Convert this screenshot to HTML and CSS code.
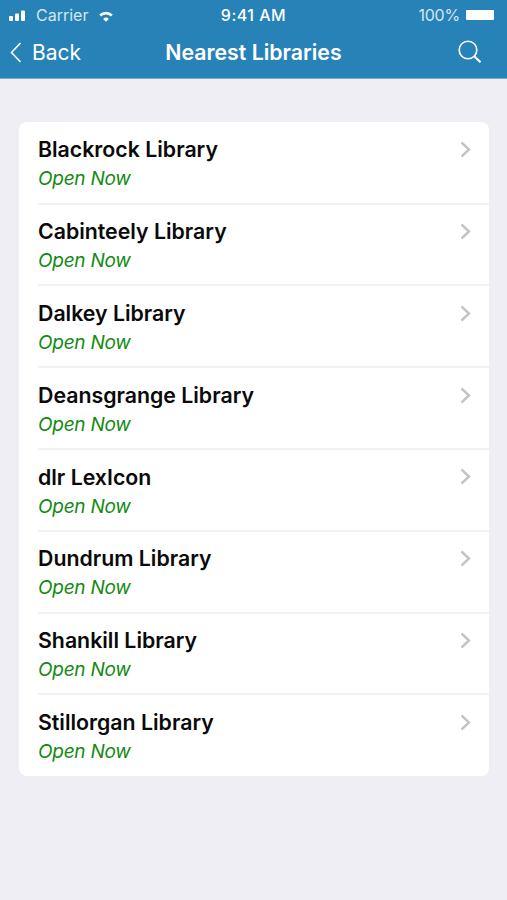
FILE: index.html
```html
<!DOCTYPE html>
<html lang="en">
<head>
  <meta charset="UTF-8">
  <title>Nearest Libraries</title>
  <meta name="viewport" content="width=device-width, initial-scale=1.0">
  <link rel="stylesheet" href="styles.css">
</head>
<body>

  <header class="header">
    <div class="status-bar">
      <div class="status-left">
        <svg class="signal" width="17" height="11" viewBox="0 0 17 11" fill="#fff">
          <rect x="0" y="6" width="4" height="5" rx="1"/>
          <rect x="6" y="3.5" width="4" height="7.5" rx="1"/>
          <rect x="12" y="0.5" width="4" height="10.5" rx="1"/>
        </svg>
        <span class="carrier">Carrier</span>
        <svg class="wifi" width="14" height="11" viewBox="0 0 14 11" fill="none" stroke="#fff">
          <path d="M1.2 4.6a8.2 8.2 0 0 1 11.6 0" stroke-width="2.8"/>
          <path d="M7 10.8L4.2 7.9a4 4 0 0 1 5.6 0z" fill="#fff" stroke="none"/>
        </svg>
      </div>
      <span class="time">9:41 AM</span>
      <div class="status-right">
        <span class="percent">100%</span>
        <span class="battery"></span>
      </div>
    </div>

    <nav class="nav-bar">
      <a class="back">
        <svg width="12" height="21" viewBox="0 0 12 21" fill="none" stroke="#fff" stroke-width="1.6">
          <path d="M10.5 1L1.5 10.5L10.5 20"/>
        </svg>
        <span class="back-label">Back</span>
      </a>
      <h1 class="title">Nearest Libraries</h1>
      <a class="search">
        <svg width="24" height="24" viewBox="0 0 24 24" fill="none" stroke="#fff" stroke-width="1.6">
          <circle cx="10" cy="10" r="8.8"/>
          <path d="M16.2 16.2L22.5 22.3" stroke-width="2"/>
        </svg>
      </a>
    </nav>
  </header>

  <ul class="library-list">
    <li class="library">
      <div class="library-info">
        <span class="library-name">Blackrock Library</span>
        <span class="library-status">Open Now</span>
      </div>
      <svg class="chevron" viewBox="0 0 11 17"><path d="M1.5 1.5L9 8.5L1.5 15.5"/></svg>
    </li>
    <li class="library">
      <div class="library-info">
        <span class="library-name">Cabinteely Library</span>
        <span class="library-status">Open Now</span>
      </div>
      <svg class="chevron" viewBox="0 0 11 17"><path d="M1.5 1.5L9 8.5L1.5 15.5"/></svg>
    </li>
    <li class="library">
      <div class="library-info">
        <span class="library-name">Dalkey Library</span>
        <span class="library-status">Open Now</span>
      </div>
      <svg class="chevron" viewBox="0 0 11 17"><path d="M1.5 1.5L9 8.5L1.5 15.5"/></svg>
    </li>
    <li class="library">
      <div class="library-info">
        <span class="library-name">Deansgrange Library</span>
        <span class="library-status">Open Now</span>
      </div>
      <svg class="chevron" viewBox="0 0 11 17"><path d="M1.5 1.5L9 8.5L1.5 15.5"/></svg>
    </li>
    <li class="library">
      <div class="library-info">
        <span class="library-name">dlr LexIcon</span>
        <span class="library-status">Open Now</span>
      </div>
      <svg class="chevron" viewBox="0 0 11 17"><path d="M1.5 1.5L9 8.5L1.5 15.5"/></svg>
    </li>
    <li class="library">
      <div class="library-info">
        <span class="library-name">Dundrum Library</span>
        <span class="library-status">Open Now</span>
      </div>
      <svg class="chevron" viewBox="0 0 11 17"><path d="M1.5 1.5L9 8.5L1.5 15.5"/></svg>
    </li>
    <li class="library">
      <div class="library-info">
        <span class="library-name">Shankill Library</span>
        <span class="library-status">Open Now</span>
      </div>
      <svg class="chevron" viewBox="0 0 11 17"><path d="M1.5 1.5L9 8.5L1.5 15.5"/></svg>
    </li>
    <li class="library">
      <div class="library-info">
        <span class="library-name">Stillorgan Library</span>
        <span class="library-status">Open Now</span>
      </div>
      <svg class="chevron" viewBox="0 0 11 17"><path d="M1.5 1.5L9 8.5L1.5 15.5"/></svg>
    </li>
  </ul>

</body>
</html>
```
FILE: styles.css
```css
* {
  box-sizing: border-box;
}

body {
  margin: 0;
  min-height: 100vh;
  font-family: Inter, "Liberation Sans", sans-serif;
  background-color: #efeef4;
}

/* Header */
.header {
  height: 79px;
  background-color: #2782b8;
  border-bottom: 1px solid #77afd0;
  color: #fff;
}

.status-bar {
  display: grid;
  grid-template-columns: 1fr auto 1fr;
  align-items: center;
  height: 30px;
  padding: 0 13px 0 13px;
  font-size: 16px;
}

.status-left,
.status-right {
  display: flex;
  align-items: center;
}

.status-left {
  margin-left: -4px;
}

.status-right {
  justify-content: flex-end;
}

.carrier {
  margin-left: 10px;
  color: #d3e6f1;
}

.wifi {
  margin: 2px 0 0 10.5px;
}

.time {
  font-size: 16px;
  font-weight: 500;
  letter-spacing: 0.5px;
}

.percent {
  color: #d3e6f1;
  letter-spacing: -0.2px;
}

.battery {
  width: 28px;
  height: 10px;
  margin-left: 6px;
  background-color: #fff;
  border-radius: 1px;
}

.nav-bar {
  display: grid;
  grid-template-columns: 1fr auto 1fr;
  align-items: center;
  height: 44px;
  padding: 0 10px;
}

.back {
  display: flex;
  align-items: center;
}

.back-label {
  margin-left: 10px;
  font-size: 21px;
}

.title {
  margin: 0;
  font-size: 21.3px;
  font-weight: 600;
}

.search {
  display: flex;
  justify-content: flex-end;
  padding-right: 15px;
}

/* List */
.library-list {
  margin: 43px 18px 0 19px;
  padding: 0 0 0 19px;
  list-style: none;
  background-color: #fff;
  border-radius: 8px;
}

.library {
  display: flex;
  justify-content: space-between;
  height: 81.8px;
  padding: 12.6px 18px 0 0;
  border-bottom: 2px solid #f2f2f4;
}

.library:first-child {
  height: 82.6px;
  padding-top: 13.4px;
}

.library:last-child {
  height: 80.6px;
  border-bottom: none;
}

.library-info {
  display: flex;
  flex-direction: column;
}

.library-name {
  font-size: 21.3px;
  font-weight: 600;
  line-height: 28px;
  color: #0a0a0a;
}

.library-status {
  font-size: 19px;
  font-style: italic;
  line-height: 32.4px;
  letter-spacing: -0.25px;
  color: #128a12;
}

.chevron {
  width: 11px;
  height: 17px;
  margin-top: 5.8px;
  fill: none;
  stroke: #c4c4c6;
  stroke-width: 2.4;
}
```
